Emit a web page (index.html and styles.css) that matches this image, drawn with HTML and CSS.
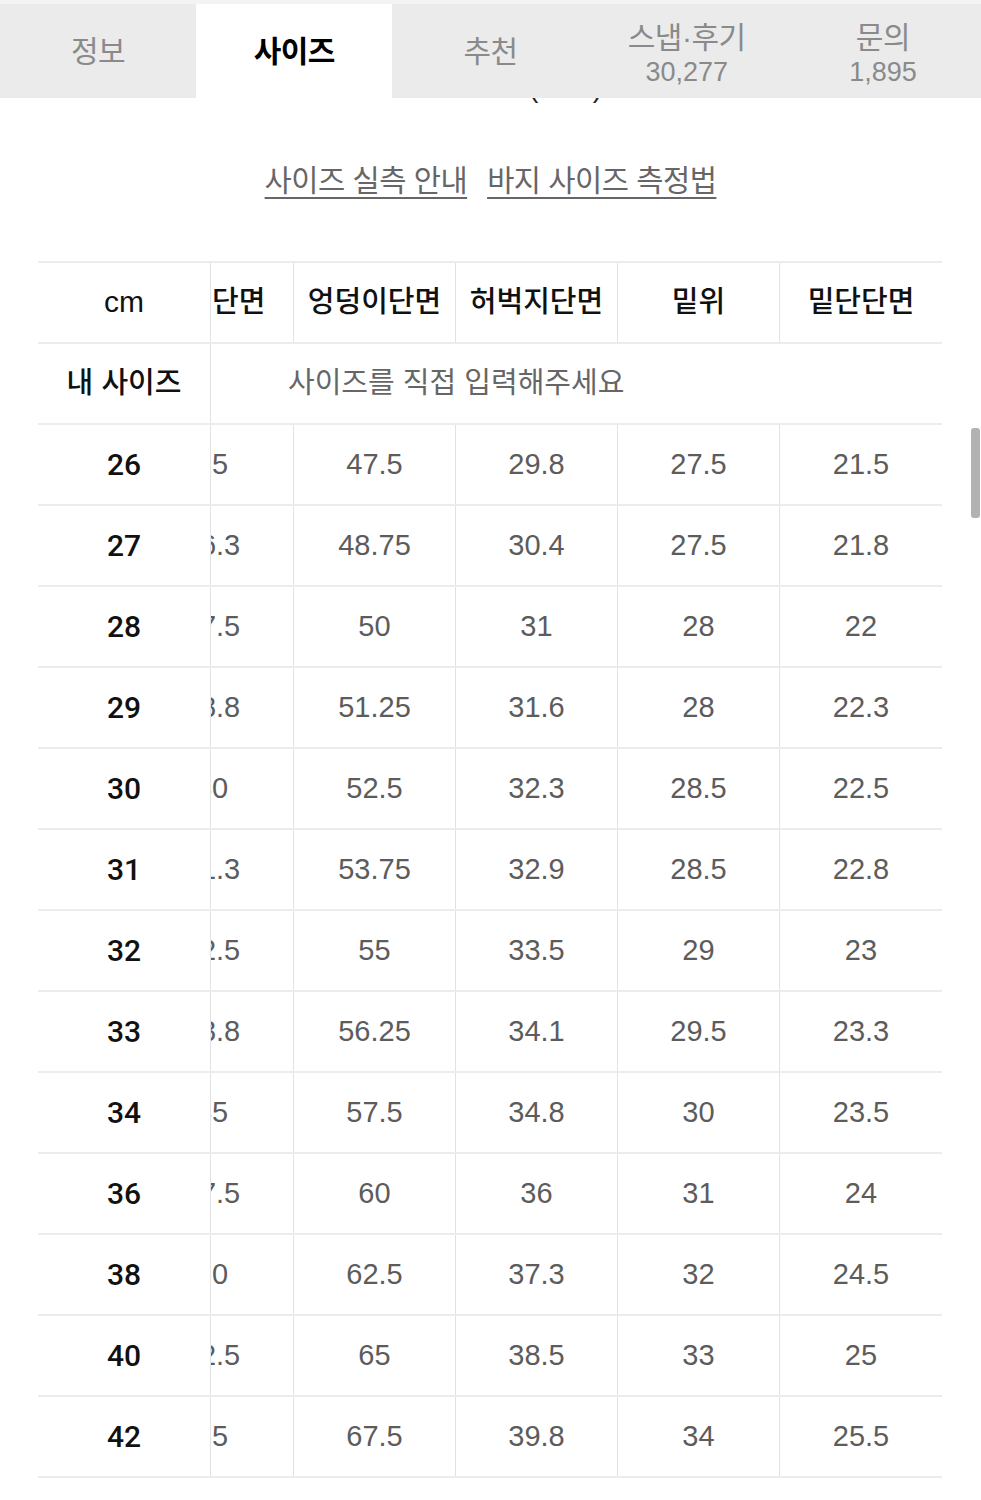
FILE: index.html
```html
<!DOCTYPE html>
<html lang="ko">
<head>
<meta charset="utf-8">
<title>사이즈</title>
<link rel="stylesheet" href="styles.css">
</head>
<body>
<div class="topstrip"></div>
<nav class="tabs">
  <div class="tab"><span class="label">정보</span></div>
  <div class="tab active"><span class="label">사이즈</span></div>
  <div class="tab"><span class="label">추천</span></div>
  <div class="tab two"><span class="label">스냅·후기</span><span class="count">30,277</span></div>
  <div class="tab two"><span class="label">문의</span><span class="count">1,895</span></div>
</nav>
<div class="remnant"><span class="remnant-text">(&nbsp;&nbsp;&nbsp;&nbsp;&nbsp;&nbsp;&nbsp;)</span></div>
<div class="links">
  <a class="link">사이즈 실측 안내</a>
  <a class="link">바지 사이즈 측정법</a>
</div>
<div class="table">
  <div class="row head">
    <div class="c first cm">cm</div>
    <div class="c cut ko"><span>허리단면</span></div>
    <div class="c ko">엉덩이단면</div>
    <div class="c ko">허벅지단면</div>
    <div class="c ko">밑위</div>
    <div class="c last ko">밑단단면</div>
  </div>
  <div class="row mine">
    <div class="c first ko">내 사이즈</div>
    <div class="c input ko">사이즈를 직접 입력해주세요</div>
  </div>
  <div class="row"><div class="c first">26</div><div class="c cut"><span>35</span></div><div class="c">47.5</div><div class="c">29.8</div><div class="c">27.5</div><div class="c last">21.5</div></div>
  <div class="row"><div class="c first">27</div><div class="c cut"><span>36.3</span></div><div class="c">48.75</div><div class="c">30.4</div><div class="c">27.5</div><div class="c last">21.8</div></div>
  <div class="row"><div class="c first">28</div><div class="c cut"><span>37.5</span></div><div class="c">50</div><div class="c">31</div><div class="c">28</div><div class="c last">22</div></div>
  <div class="row"><div class="c first">29</div><div class="c cut"><span>38.8</span></div><div class="c">51.25</div><div class="c">31.6</div><div class="c">28</div><div class="c last">22.3</div></div>
  <div class="row"><div class="c first">30</div><div class="c cut"><span>40</span></div><div class="c">52.5</div><div class="c">32.3</div><div class="c">28.5</div><div class="c last">22.5</div></div>
  <div class="row"><div class="c first">31</div><div class="c cut"><span>41.3</span></div><div class="c">53.75</div><div class="c">32.9</div><div class="c">28.5</div><div class="c last">22.8</div></div>
  <div class="row"><div class="c first">32</div><div class="c cut"><span>42.5</span></div><div class="c">55</div><div class="c">33.5</div><div class="c">29</div><div class="c last">23</div></div>
  <div class="row"><div class="c first">33</div><div class="c cut"><span>43.8</span></div><div class="c">56.25</div><div class="c">34.1</div><div class="c">29.5</div><div class="c last">23.3</div></div>
  <div class="row"><div class="c first">34</div><div class="c cut"><span>45</span></div><div class="c">57.5</div><div class="c">34.8</div><div class="c">30</div><div class="c last">23.5</div></div>
  <div class="row"><div class="c first">36</div><div class="c cut"><span>47.5</span></div><div class="c">60</div><div class="c">36</div><div class="c">31</div><div class="c last">24</div></div>
  <div class="row"><div class="c first">38</div><div class="c cut"><span>50</span></div><div class="c">62.5</div><div class="c">37.3</div><div class="c">32</div><div class="c last">24.5</div></div>
  <div class="row"><div class="c first">40</div><div class="c cut"><span>52.5</span></div><div class="c">65</div><div class="c">38.5</div><div class="c">33</div><div class="c last">25</div></div>
  <div class="row"><div class="c first">42</div><div class="c cut"><span>55</span></div><div class="c">67.5</div><div class="c">39.8</div><div class="c">34</div><div class="c last">25.5</div></div>
</div>
<div class="scrollbar"></div>
</body>
</html>
```
FILE: styles.css
```css
* { box-sizing: border-box; }
html, body { margin: 0; padding: 0; }
body {
  background: #fff;
  font-family: "Liberation Sans", "Noto Sans CJK KR", sans-serif;
  color: #111;
  width: 981px;
  height: 1500px;
  overflow: hidden;
}
.topstrip { height: 4px; background: #f3f3f3; }
.tabs {
  display: flex;
  height: 94px;
  background: #ebebeb;
}
.tab {
  flex: 1 1 0;
  display: flex;
  flex-direction: column;
  align-items: center;
  justify-content: center;
  color: #8a8a8a;
  padding-top: 1px;
}
.tab .label {
  font-size: 30px;
  line-height: 34px;
  letter-spacing: -0.5px;
}
.tab.active { background: #fff; color: #000; }
.tab.active .label { font-weight: 700; }
.tab.two { padding-top: 7px; }
.tab .count {
  font-size: 27px;
  line-height: 34px;
  color: #8a8a8a;
}
.remnant {
  height: 6px;
  overflow: hidden;
  display: flex;
  justify-content: center;
}
.remnant-text {
  display: block;
  font-size: 28px;
  line-height: 28px;
  margin-top: -24px;
  margin-left: 150px;
  color: #222;
}
.links {
  display: flex;
  justify-content: center;
  gap: 20px;
  margin-top: 57px;
  height: 40px;
}
.link {
  font-size: 29.6px;
  line-height: 40px;
  color: #666;
  text-decoration: underline;
  text-decoration-thickness: 2px;
  text-underline-offset: 6px;
  letter-spacing: -0.5px;
}
.table {
  margin: 60px 39px 0 38px;
  border-top: 2px solid #ececec;
}
.row {
  display: grid;
  grid-template-columns: 173px 83px 162px 162px 162px 162px;
  height: 81px;
  border-bottom: 2px solid #ececec;
}
.c {
  display: flex;
  align-items: center;
  justify-content: center;
  font-size: 29px;
  color: #5c5c5c;
  border-right: 1px solid #e2e2e2;
  white-space: nowrap;
}
.c.ko { padding-bottom: 8px; }
.c.last { border-right: none; }
.c.first {
  color: #111;
  font-family: Roboto, "Noto Sans CJK KR", sans-serif;
  font-weight: 500;
  font-size: 30px;
}
.head .c {
  color: #111;
  font-size: 29px;
  font-weight: 500;
}
.head .c.cm { font-family: "Liberation Sans", sans-serif; font-size: 30px; font-weight: 400; padding-bottom: 2px; }
.c.cut {
  overflow: hidden;
  justify-content: flex-start;
}
.c.cut span {
  display: block;
  flex: 0 0 162px;
  width: 162px;
  margin-left: -80px;
  text-align: center;
}
.mine .c.first { font-family: "Noto Sans CJK KR", sans-serif; font-weight: 500; font-size: 29px; }
.c.input {
  grid-column: 2 / 7;
  justify-content: flex-start;
  padding-left: 77px;
  border-right: none;
  font-family: "Noto Sans CJK KR", sans-serif;
  font-size: 29px;
  color: #666;
}
.scrollbar {
  position: absolute;
  left: 971px;
  top: 428px;
  width: 9px;
  height: 90px;
  background: #b2b2b2;
  border-radius: 3px;
}
```
